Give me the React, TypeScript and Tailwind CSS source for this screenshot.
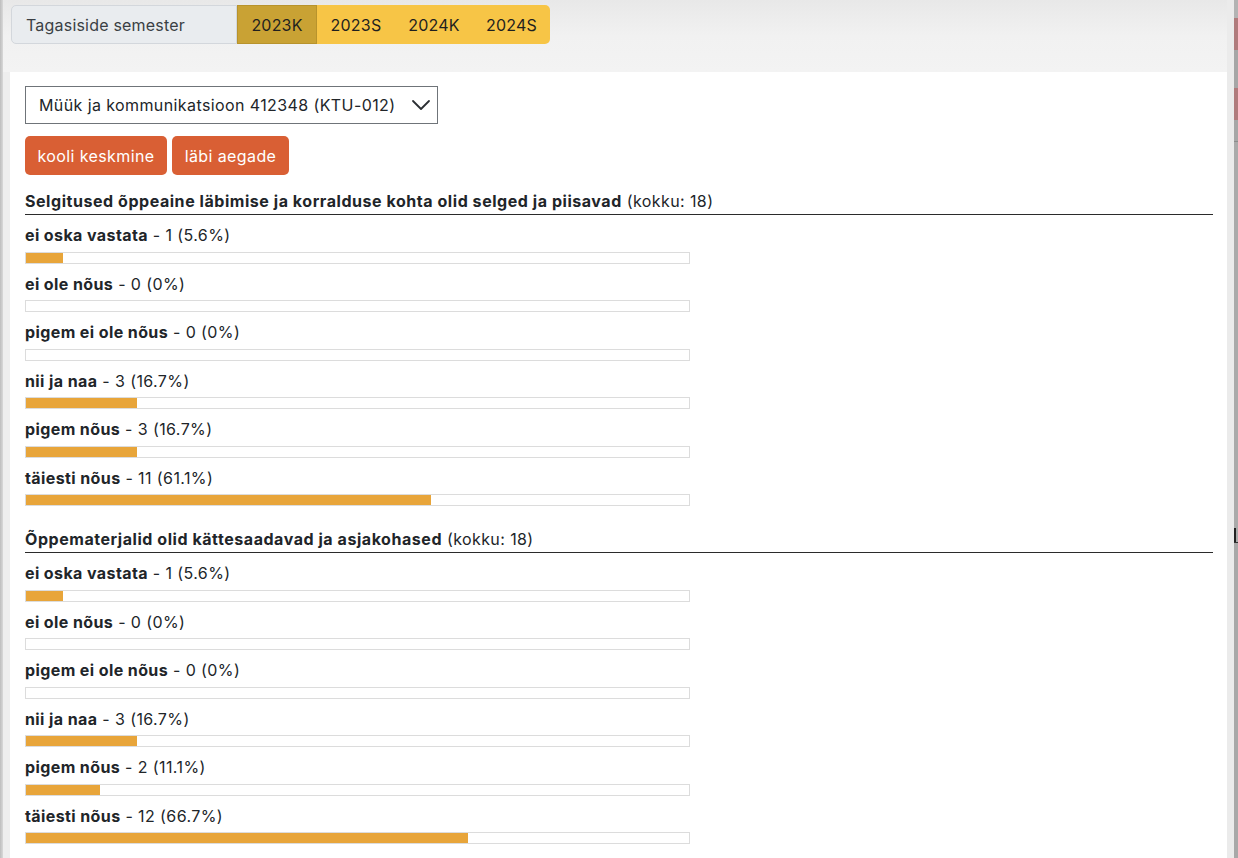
import React from "react"

type Answer = { label: string; count: number; pct: number }
type Question = { title: string; total: number; answers: Answer[] }

const questions: Question[] = [
  {
    title: "Selgitused õppeaine läbimise ja korralduse kohta olid selged ja piisavad",
    total: 18,
    answers: [
      { label: "ei oska vastata", count: 1, pct: 5.6 },
      { label: "ei ole nõus", count: 0, pct: 0 },
      { label: "pigem ei ole nõus", count: 0, pct: 0 },
      { label: "nii ja naa", count: 3, pct: 16.7 },
      { label: "pigem nõus", count: 3, pct: 16.7 },
      { label: "täiesti nõus", count: 11, pct: 61.1 },
    ],
  },
  {
    title: "Õppematerjalid olid kättesaadavad ja asjakohased",
    total: 18,
    answers: [
      { label: "ei oska vastata", count: 1, pct: 5.6 },
      { label: "ei ole nõus", count: 0, pct: 0 },
      { label: "pigem ei ole nõus", count: 0, pct: 0 },
      { label: "nii ja naa", count: 3, pct: 16.7 },
      { label: "pigem nõus", count: 2, pct: 11.1 },
      { label: "täiesti nõus", count: 12, pct: 66.7 },
    ],
  },
]

const semesters = [
  { name: "2023K", w: "w-[80px]", active: true },
  { name: "2023S", w: "w-[78px]", active: false },
  { name: "2024K", w: "w-[78px]", active: false },
  { name: "2024S", w: "w-[77px]", active: false },
]

export default function App() {
  return (
    <div
      className="w-[1238px] h-[858px] overflow-hidden flex bg-[#eeeeee] text-[#212529] tracking-[0.4px]"
      style={{ fontFamily: "Inter, 'Noto Sans', sans-serif" }}
    >
      {/* left window edge */}
      <div className="w-[3px] shrink-0 bg-gradient-to-r from-[#bdbdbd] to-[#d9d9d9]" />

      <div className="flex-1 flex flex-col min-w-0">
        {/* semester picker */}
        <div className="h-[72px] shrink-0 pt-[5px] pl-[8px] bg-gradient-to-b from-[#e8e8e8] via-[#f1f1f1] to-[#f3f3f3]">
          <div className="flex h-[39px] text-[16px] tracking-[0.2px]">
            <div className="w-[226px] flex items-center pl-[14px] bg-[#e9ecef] border border-[#d3d7dc] rounded-l-[5px] text-[#3a3f44]">
              Tagasiside semester
            </div>
            {semesters.map((s, i) => (
              <div
                key={s.name}
                className={`${s.w} flex items-center justify-center ${
                  s.active ? "bg-[#c9a234] border border-[#b8932c]" : "bg-[#f7c546]"
                } ${i === semesters.length - 1 ? "rounded-r-[5px]" : ""} text-[#1f1f1f]`}
              >
                {s.name}
              </div>
            ))}
          </div>
        </div>

        {/* content panel */}
        <div className="flex-1 ml-[7px] bg-white pl-[15px] pr-[14px] pt-[14px]">
          <div className="w-[413px] h-[38px] border border-[#6f7479] flex items-center justify-between pl-[13px] pr-[6px] text-[16px]">
            <span>Müük ja kommunikatsioon 412348 (KTU-012)</span>
            <svg width="20" height="12" viewBox="0 0 20 12" fill="none">
              <polyline points="2,2 10,10 18,2" stroke="#2b2f33" strokeWidth="1.8" strokeLinecap="round" strokeLinejoin="round" />
            </svg>
          </div>

          <div className="flex gap-[5px] mt-[12px]">
            <button className="w-[142px] h-[39px] rounded-[5px] bg-[#d95f34] text-white text-[16px]">kooli keskmine</button>
            <button className="w-[117px] h-[39px] rounded-[5px] bg-[#d95f34] text-white text-[16px]">läbi aegade</button>
          </div>

          <div className="mt-[14px]">
            {questions.map((q, qi) => (
              <div key={qi} className={qi > 0 ? "mt-[21px]" : ""}>
                <div className="text-[16px] leading-[24px] pb-[1px] border-b border-[#2b2b2b]">
                  <span className="font-bold tracking-[0.55px]">{q.title}</span> (kokku: {q.total})
                </div>
                <div className="pt-[8px]">
                  {q.answers.map((a, ai) => (
                    <div key={ai} className={ai > 0 ? "mt-[8px]" : ""}>
                      <div className="text-[16px] leading-[24px]">
                        <span className="font-bold">{a.label}</span> - {a.count} ({a.pct}%)
                      </div>
                      <div className="mt-[4.5px] w-[665px] h-[12px] border border-[#dcdcdc] bg-white">
                        <div className="h-full bg-[#e8a53a]" style={{ width: `${a.pct}%` }} />
                      </div>
                    </div>
                  ))}
                </div>
              </div>
            ))}
          </div>
        </div>
      </div>

      {/* right edge: gutter and window behind */}
      <div className="w-[7px] shrink-0 bg-[#ebebeb]" />
      <div className="w-[4px] shrink-0 flex flex-col bg-[#a9a9a9]">
        <div className="h-[18px] bg-[#b3b3b3]" />
        <div className="h-[32px] bg-[#b07b7c]" />
        <div className="h-[38px] bg-[#a6a6a6]" />
        <div className="h-[32px] bg-[#b07b7c]" />
        <div className="h-[22px] bg-[#a6a6a6] border-b border-[#8c8c8c]" />
        <div className="h-[386px] bg-[#aaaaaa]" />
        <div className="h-[14px] w-[2px] bg-[#222222]" />
        <div className="h-[1px] bg-[#333333]" />
        <div className="flex-1 bg-[#a8a8a8]" />
      </div>
    </div>
  )
}
